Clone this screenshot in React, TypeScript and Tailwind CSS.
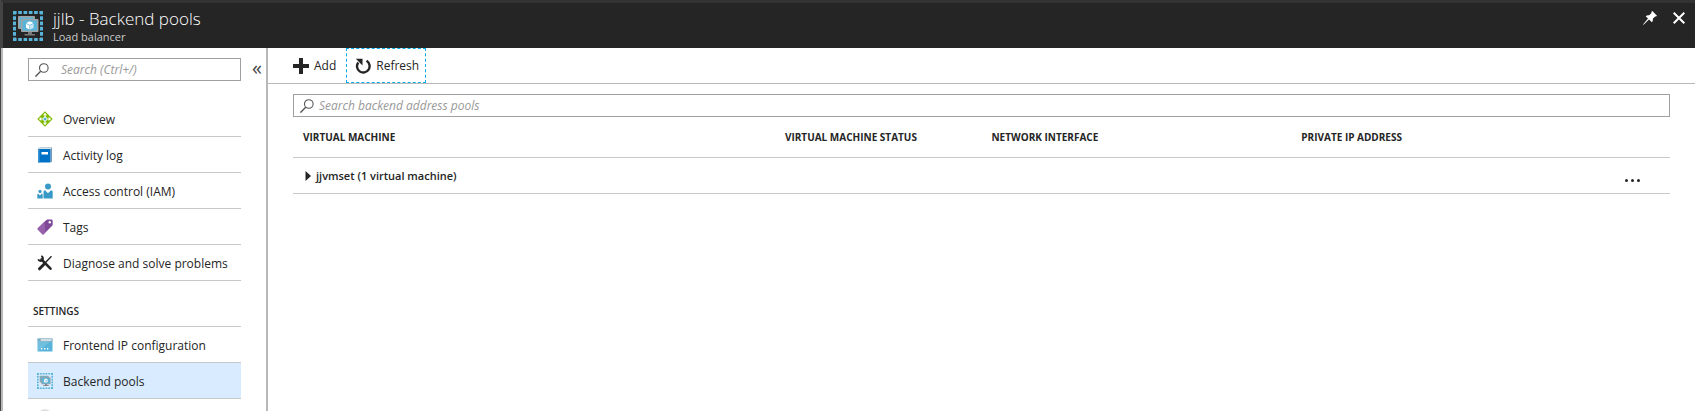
import type { ReactNode } from "react";

function SearchIcon() {
  return (
    <svg viewBox="0 0 14 14" className="h-3.5 w-3.5 shrink-0" fill="none" stroke="#555" aria-hidden="true">
      <circle cx="8.8" cy="5" r="4.3" strokeWidth="1.1" />
      <path d="M5.7 8.2 .4 13.6" strokeWidth="1.4" />
    </svg>
  );
}

function PoolIcon({ className }: { className: string }) {
  return (
    <svg viewBox="0 0 30 30" className={className} aria-hidden="true">
      <g stroke="#59b4d9" strokeWidth="3" fill="none">
        <path d="M0 1.5H30M0 28.5H30" strokeDasharray="3.600 1.680" />
        <path d="M1.500 0V30M28.500 0V30" strokeDasharray="3.600 1.680" />
      </g>
      <rect x="5" y="5" width="17" height="13" rx="1" fill="#a0a1a2" />
      <rect x="6.5" y="6.500" width="14" height="10" fill="#59b4d9" />
      <rect x="8" y="8" width="17.500" height="13" rx="1" fill="#a0a1a2" />
      <rect x="9.500" y="9.300" width="14.500" height="10.400" fill="#59b4d9" />
      <path d="M15 21h4v2h3v1.500H11.500V23H15z" fill="#7a7a7a" />
      <path d="m16.800 10.300 3.700 1.800-3.700 1.900-3.700-1.900z" fill="#fff" />
      <path d="m13 12.800 3.500 1.700v4L13 16.700z" fill="#fff" />
      <path d="m20.600 12.800-3.500 1.700v4l3.500-1.800z" fill="#cde8f4" />
    </svg>
  );
}

function OverviewIcon() {
  return (
    <svg viewBox="0 0 16 16" className="h-4 w-4" aria-hidden="true">
      <path d="M8 .3 15.700 8 8 15.700.3 8z" fill="#7fba00" />
      <path d="M8 3v10M3 8h10" stroke="#fff" strokeWidth="1.200" />
      <path d="M8 1.800 10 4.300H6zM8 14.200 10 11.700H6zM1.800 8 4.300 6v4zM14.200 8 11.700 6v4z" fill="#fff" />
      <circle cx="8" cy="8" r="2.200" fill="#fff" />
      <circle cx="8" cy="8" r="1.600" fill="#59b4d9" />
    </svg>
  );
}

function LogIcon() {
  return (
    <svg viewBox="0 0 16 16" className="h-4 w-4" aria-hidden="true">
      <path d="M2.500.5H15V15h-1.500V2H1z" fill="#7a9cb8" />
      <path d="M2.500 1H14v1H1.500z" fill="#d8e4ec" />
      <path d="M1 2h12.500v13.500H1z" fill="#0072c6" />
      <path d="M1 2h1.500v13.500H1z" fill="#3f94d4" />
      <path d="M4.500 5H11v2.500H4.500z" fill="#fff" />
    </svg>
  );
}

function PeopleIcon() {
  return (
    <svg viewBox="0 0 16 16" className="h-4 w-4" fill="#3999c6" aria-hidden="true">
      <circle cx="11" cy="3.500" r="3" />
      <path d="M6.500 15.500V9c0-1 .6-1.700 1.600-1.700L11 10.200l2.900-2.900c1.200 0 1.800.7 1.800 1.700v6.500z" />
      <circle cx="3" cy="8.400" r="1.600" />
      <path d="M.3 15.500v-3.600c0-.7.300-1.100 1-1.100L3 12.400l1.700-1.600c.7 0 1 .4 1 1.100v3.600z" />
    </svg>
  );
}

function TagIcon() {
  return (
    <svg viewBox="0 0 16 16" className="h-4 w-4" aria-hidden="true">
      <path d="M.8 9.200 9.300 1c.4-.3.800-.5 1.300-.5h3.600c.9 0 1.500.6 1.500 1.500v3.500c0 .5-.2 1-.5 1.300l-8.500 8.500c-.4.400-.9.400-1.300 0L.8 10.500c-.4-.4-.4-.9 0-1.300z" fill="#804998" />
      <path d="M.8 9.200 7.500 2.700l.8 10.900-1.600 1.700c-.4.400-.9.400-1.300 0L.8 10.500c-.4-.4-.4-.9 0-1.300z" fill="#9662ab" />
      <circle cx="12.800" cy="3.300" r="1.200" fill="#fff" />
    </svg>
  );
}

function ToolsIcon() {
  return (
    <svg viewBox="0 0 16 16" className="h-4 w-4" fill="none" stroke="#252525" aria-hidden="true">
      <path d="m4.500 4.500 9 9.200" strokeWidth="2.600" strokeLinecap="round" />
      <path d="M4.200 1.200a2.400 2.400 0 1 1-2.900 3" strokeWidth="1.900" />
      <path d="M14.500 1.300 8 8" strokeWidth="1.400" />
      <path d="m7 9.200-4.500 4.600" strokeWidth="3" strokeLinecap="round" />
    </svg>
  );
}

function FrontendIcon() {
  return (
    <svg viewBox="0 0 16 14" className="h-3.5 w-4" aria-hidden="true">
      <path d="M.5.500h15v13H.5z" fill="#59b4d9" />
      <path d="M.5.500h15v3H.5z" fill="#a0b4be" />
      <path d="M4 1.300h10.500v1.400H4z" fill="#e8f3f8" />
      <circle cx="2.200" cy="2" r=".9" fill="#59b4d9" />
      <path d="M.5 13.500v-10h13z" fill="#fff" opacity=".15" />
      <path d="M4 10h1.300v1.500H4zM7 10h1.300v1.500H7zM10 10h1.300v1.500H10z" fill="#fff" />
    </svg>
  );
}

function ProbeIcon() {
  return (
    <svg viewBox="0 0 16 16" className="h-4 w-4" aria-hidden="true">
      <circle cx="8" cy="8" r="7" fill="#f4f4f4" stroke="#dcdcdc" strokeWidth="1.500" />
    </svg>
  );
}

function NavItem({ icon, label, active = false }: { icon: ReactNode; label: string; active?: boolean }) {
  return (
    <li className={active ? "border-b border-[#c8c8c8] bg-[#d9ecff]" : "border-b border-[#c8c8c8]"}>
      <a href="#" aria-current={active ? "page" : undefined} className="flex h-[35px] items-center gap-2.5 pl-[9px] text-xs">
        <span className="flex w-4 shrink-0 items-center justify-center">{icon}</span>
        <span className="pt-0.5">{label}</span>
      </a>
    </li>
  );
}

function Sidebar() {
  return (
    <aside className="flex w-[267px] shrink-0 flex-col border-x-2 border-[#b8b8b8]">
      <div className="flex items-center gap-2 pt-2.5 pl-[25px]">
        <label className="flex h-[23px] w-[213px] items-center gap-3 border border-[#a0a0a0] px-1.5">
          <SearchIcon />
          <input
            type="text"
            aria-label="Search menu"
            placeholder="Search (Ctrl+/)"
            className="min-w-0 flex-1 text-xs italic outline-none placeholder:text-[#999]"
          />
        </label>
        <button type="button" aria-label="Collapse menu" className="w-4 pb-1 text-center text-xl leading-4 text-[#444]">
          «
        </button>
      </div>
      <nav className="mt-5 mr-[25px] ml-[25px]">
        <ul>
          <NavItem icon={<OverviewIcon />} label="Overview" />
          <NavItem icon={<LogIcon />} label="Activity log" />
          <NavItem icon={<PeopleIcon />} label="Access control (IAM)" />
          <NavItem icon={<TagIcon />} label="Tags" />
          <NavItem icon={<ToolsIcon />} label="Diagnose and solve problems" />
        </ul>
        <h2 className="flex h-[46px] items-end border-b border-[#c8c8c8] pb-[7px] pl-[5px] text-[10px] leading-4 font-semibold">
          SETTINGS
        </h2>
        <ul>
          <NavItem icon={<FrontendIcon />} label="Frontend IP configuration" />
          <NavItem icon={<PoolIcon className="h-4 w-4" />} label="Backend pools" active />
          <NavItem icon={<ProbeIcon />} label="" />
        </ul>
      </nav>
    </aside>
  );
}

function Toolbar() {
  return (
    <div className="flex h-9 items-stretch border-b border-[#b8b8b8] pl-6 text-xs">
      <button type="button" className="flex items-center gap-[5px] pr-2.5 pl-px">
        <svg viewBox="0 0 16 16" className="h-4 w-4" aria-hidden="true">
          <path d="M6 0h4v6h6v4h-6v6H6v-6H0V6h6z" fill="#252525" />
        </svg>
        Add
      </button>
      <button type="button" className="flex items-center gap-[5px] border border-dashed border-[#00abec] pr-1.5 pl-2">
        <svg viewBox="0 0 16 16" className="h-4 w-4" aria-hidden="true">
          <path d="M11.500 2.800A6.300 6.300 0 1 1 3.300 4.400" fill="none" stroke="#252525" strokeWidth="2.400" />
          <path d="M.8.700h6.700v6.800z" fill="#252525" />
        </svg>
        Refresh
      </button>
    </div>
  );
}

const heading = "h-10 pt-0.5 pl-2.5 text-left align-middle text-[10px] font-bold";

function PoolTable() {
  return (
    <table className="w-full table-fixed border-collapse">
      <thead>
        <tr className="border-b border-[#c8c8c8]">
          <th scope="col" className={`w-[35%] ${heading}`}>VIRTUAL MACHINE</th>
          <th scope="col" className={`w-[15%] ${heading}`}>VIRTUAL MACHINE STATUS</th>
          <th scope="col" className={`w-[22.5%] ${heading}`}>NETWORK INTERFACE</th>
          <th scope="col" className={heading}>PRIVATE IP ADDRESS</th>
        </tr>
      </thead>
      <tbody>
        <tr className="h-9 border-b border-[#c8c8c8]">
          <td colSpan={3} className="pt-0.5 pl-3">
            <button type="button" aria-expanded="false" className="flex items-center gap-[5px] text-[11px] leading-4 font-semibold">
              <svg viewBox="0 0 6 10" className="h-2.5 w-1.5" aria-hidden="true">
                <path d="M.5 0 6 5 .5 10z" fill="#252525" />
              </svg>
              jjvmset (1 virtual machine)
            </button>
          </td>
          <td className="pr-[30px]">
            <button type="button" aria-label="More actions" className="ml-auto block pt-2.5">
              <svg viewBox="0 0 15 3" className="h-[3px] w-[15px]" fill="#252525" aria-hidden="true">
                <circle cx="1.500" cy="1.500" r="1.500" />
                <circle cx="7.500" cy="1.500" r="1.500" />
                <circle cx="13.500" cy="1.500" r="1.500" />
              </svg>
            </button>
          </td>
        </tr>
      </tbody>
    </table>
  );
}

export default function App() {
  return (
    <div className="flex h-screen flex-col overflow-hidden border-l border-[#444] bg-white font-['Open_Sans','Noto_Sans',sans-serif] text-[#252525]">
      <header className="flex h-12 shrink-0 items-center border-t-[3px] border-l-2 border-t-[#333] border-l-[#444] bg-[#252525] pr-2.5 pl-2.5 text-white">
        <PoolIcon className="h-[30px] w-[30px] shrink-0" />
        <div className="ml-2.5 flex-1 pb-px">
          <h1 className="text-[17px] leading-6 font-light">jjlb - Backend pools</h1>
          <p className="text-[11px] leading-3 text-[#ccc]">Load balancer</p>
        </div>
        <div className="mb-4 flex items-center gap-4">
          <button type="button" aria-label="Pin">
            <svg viewBox="0 0 14 14" className="h-3.5 w-3.5" fill="#fff" aria-hidden="true">
              <path d="M9.300 0 14 4.700l-1 .9-.9-.2-2.300 2.400c.3 1.300 0 2.500-.9 3.400L6 8.400.600 13.800 0 13.500 5 7.500 2.700 5.200c1-.9 2.200-1.200 3.500-.9l2.300-2.400-.2-.9z" />
            </svg>
          </button>
          <button type="button" aria-label="Close">
            <svg viewBox="0 0 12 12" className="h-3 w-3" stroke="#fff" strokeWidth="2" aria-hidden="true">
              <path d="m.7.7 10.600 10.600M11.300.7.700 11.300" />
            </svg>
          </button>
        </div>
      </header>
      <div className="flex min-h-0 flex-1">
        <Sidebar />
        <main className="min-w-0 flex-1">
          <Toolbar />
          <div className="pt-2.5 pr-[25px] pl-[25px]">
            <label className="flex h-[23px] items-center gap-[5px] border border-[#a0a0a0] px-1.5">
              <SearchIcon />
              <input
                type="text"
                aria-label="Search backend address pools"
                placeholder="Search backend address pools"
                className="min-w-0 flex-1 text-xs italic outline-none placeholder:text-[#999]"
              />
            </label>
            <PoolTable />
          </div>
        </main>
      </div>
    </div>
  );
}
